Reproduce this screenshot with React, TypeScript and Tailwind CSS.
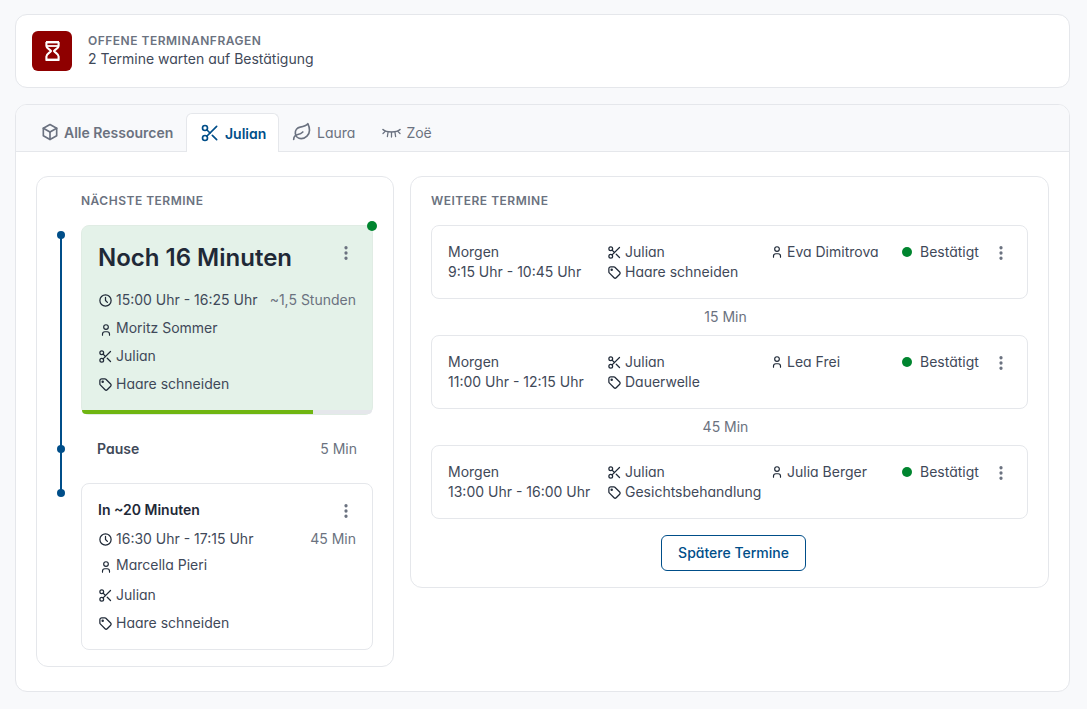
import React from "react";
import { TbBox, TbClock, TbUser, TbTag, TbDotsVertical } from "react-icons/tb";
import { Scissors, Leaf } from "lucide-react";

function InfoRow({ icon, children, className = "" }: { icon: React.ReactNode; children: React.ReactNode; className?: string }) {
  return (
    <div className={`flex items-center gap-[3px] text-[14px] leading-5 text-[#3f4959] ${className}`}>
      <span className="flex w-[15px] justify-center text-[#1f2937]">{icon}</span>
      <span>{children}</span>
    </div>
  );
}

function Dots({ className = "" }: { className?: string }) {
  return <TbDotsVertical size={18} strokeWidth={2.4} className={`text-[#6b7280] ${className}`} />;
}

function Hourglass() {
  return (
    <svg width="15" height="20" viewBox="0 0 15 20" fill="none" stroke="currentColor" strokeWidth="2.1" strokeLinejoin="round">
      <path d="M1 1.2h13" strokeWidth="2.4" />
      <path d="M1 5h13" strokeWidth="1.8" />
      <path d="M1.4 1v4C1.4 7.2 5 8.2 6 10 5 11.8 1.4 13 1.4 15.5V19h12.2v-3.5c0-2.5-3.6-3.7-4.6-5.5 1-1.8 4.6-2.8 4.6-5V1" />
      <path d="M1 18.8h13" strokeWidth="2.4" />
    </svg>
  );
}

function LashEye() {
  return (
    <svg width="19" height="11" viewBox="0 0 19 11" fill="none" stroke="currentColor" strokeWidth="1.6" strokeLinecap="round">
      <path d="M1 2.5C3 4.5 6 5 9.5 5s6.5-.5 8.5-2.5" />
      <path d="M6 5.5L5.4 9.5M9.5 5.5v4.5M13 5.5l.6 4M3.2 4.4L1 6.5M15.8 4.4L18 6.5" strokeWidth="1.3" />
    </svg>
  );
}

const later = [
  { time: "9:15 Uhr - 10:45 Uhr", service: "Haare schneiden", client: "Eva Dimitrova", gap: "15 Min" },
  { time: "11:00 Uhr - 12:15 Uhr", service: "Dauerwelle", client: "Lea Frei", gap: "45 Min" },
  { time: "13:00 Uhr - 16:00 Uhr", service: "Gesichtsbehandlung", client: "Julia Berger", gap: "" },
];

const labelClass = "text-[12px] font-semibold leading-4 tracking-[0.5px] text-[#6b7280]";

export default function App() {
  return (
    <div className="min-h-[709px] bg-[#f8f9fb] pl-[15px] pr-[17px] pt-[14px] pb-[17px] font-['Inter',sans-serif] [font-feature-settings:'cv11'] text-[#3f4959]">
      <div className="flex h-[74px] items-center gap-4 rounded-xl border border-[#e5e7eb] bg-white px-4">
        <div className="flex h-10 w-10 items-center justify-center rounded-md bg-[#8f0000] text-white">
          <Hourglass />
        </div>
        <div>
          <div className={labelClass}>OFFENE TERMINANFRAGEN</div>
          <div className="text-[14px] leading-5 text-[#3f4959]">2 Termine warten auf Bestätigung</div>
        </div>
      </div>

      <div className="mt-4 h-[588px] overflow-hidden rounded-xl border border-[#e5e7eb] bg-white">
        <div className="flex h-[47px] items-end border-b border-[#e5e7eb] bg-[#f8f9fb] pl-[24px] text-[14px]">
          <div className="flex h-[38px] w-[146px] items-center gap-[4px] font-semibold text-[#6b7280]">
            <TbBox size={20} />
            Alle Ressourcen
          </div>
          <div className="-mb-px flex h-[39px] w-[93px] items-center gap-[5px] rounded-t-md border border-b-0 border-[#e5e7eb] bg-white pl-[13px] font-semibold text-[#004e89]">
            <Scissors size={20} />
            Julian
          </div>
          <div className="flex h-[38px] items-center gap-[5px] pl-[13px] pr-[27px] text-[#6b7280]">
            <Leaf size={20} />
            Laura
          </div>
          <div className="flex h-[38px] items-center gap-[5px] text-[#6b7280]">
            <LashEye />
            Zoë
          </div>
        </div>

        <div className="flex items-start gap-4 px-5 pt-6">
          <div className="relative h-[491px] w-[358px] shrink-0 rounded-xl border border-[#e5e7eb] bg-white pl-11 pr-5 pt-4">
            <div className="absolute left-[23px] top-[58px] h-[258px] w-[2px] bg-[#004e89]" />
            <div className="absolute left-[20px] top-[54px] h-2 w-2 rounded-full bg-[#004e89]" />
            <div className="absolute left-[20px] top-[268px] h-2 w-2 rounded-full bg-[#004e89]" />
            <div className="absolute left-[20px] top-[312px] h-2 w-2 rounded-full bg-[#004e89]" />

            <div className={labelClass}>NÄCHSTE TERMINE</div>

            <div className="relative mt-4 h-[190px] rounded-lg border border-[#e0ece4] bg-[#e4f2e9]">
              <div className="absolute -right-[5px] -top-[5px] h-[10px] w-[10px] rounded-full bg-[#00852f]" />
              <div className="flex items-start justify-between pl-4 pr-[17px] pt-4">
                <div className="text-[24px] font-semibold leading-8 text-[#1f2937]">Noch 16 Minuten</div>
                <Dots className="mt-[2px]" />
              </div>
              <div className="mt-4 flex flex-col gap-2 pl-4 pr-4">
                <div className="flex justify-between">
                  <InfoRow icon={<TbClock size={15} />}>15:00 Uhr - 16:25 Uhr</InfoRow>
                  <span className="text-[14px] leading-5 text-[#6b7280]">~1,5 Stunden</span>
                </div>
                <InfoRow icon={<TbUser size={14} className="translate-y-[2px]" />}>Moritz Sommer</InfoRow>
                <InfoRow icon={<Scissors size={15} />}>Julian</InfoRow>
                <InfoRow icon={<TbTag size={15} />}>Haare schneiden</InfoRow>
              </div>
              <div className="absolute inset-x-0 bottom-0 h-1 overflow-hidden rounded-b-lg bg-[#e5e7eb]">
                <div className="h-1 w-[231px] bg-[#6fb511]" />
              </div>
            </div>

            <div className="flex h-[68px] items-center justify-between pb-[2px] pl-4 pr-4 text-[14px]">
              <span className="font-semibold text-[#3f4959]">Pause</span>
              <span className="text-[#6b7280]">5 Min</span>
            </div>

            <div className="h-[167px] rounded-lg border border-[#e5e7eb] bg-white px-4 pt-4">
              <div className="flex items-center justify-between pr-[1px]">
                <div className="text-[14px] font-semibold leading-5 text-[#1f2937]">In ~20 Minuten</div>
                <Dots className="translate-y-[1px]" />
              </div>
              <div className="mt-[9px] flex justify-between">
                <InfoRow icon={<TbClock size={15} />}>16:30 Uhr - 17:15 Uhr</InfoRow>
                <span className="text-[14px] leading-5 text-[#6b7280]">45 Min</span>
              </div>
              <InfoRow icon={<TbUser size={14} className="translate-y-[2px]" />} className="mt-[6px]">Marcella Pieri</InfoRow>
              <InfoRow icon={<Scissors size={15} />} className="mt-[10px]">Julian</InfoRow>
              <InfoRow icon={<TbTag size={15} />} className="mt-2">Haare schneiden</InfoRow>
            </div>
          </div>

          <div className="flex h-[412px] w-[639px] shrink-0 flex-col rounded-xl border border-[#e5e7eb] bg-white px-5 pt-4">
            <div className={labelClass}>WEITERE TERMINE</div>
            <div className="mt-4 flex flex-col">
              {later.map((t) => (
                <React.Fragment key={t.client}>
                  <div className="flex h-[74px] rounded-lg border border-[#e5e7eb] bg-white pl-4 pt-4 text-[14px] leading-5 text-[#3f4959]">
                    <div className="w-[159px] shrink-0">
                      <div>Morgen</div>
                      <div>{t.time}</div>
                    </div>
                    <div className="w-[162px] shrink-0">
                      <InfoRow icon={<Scissors size={15} />}>Julian</InfoRow>
                      <InfoRow icon={<TbTag size={15} />}>{t.service}</InfoRow>
                    </div>
                    <div className="w-[133px] shrink-0">
                      <InfoRow icon={<TbUser size={14} />}>{t.client}</InfoRow>
                    </div>
                    <div className="flex h-5 items-center gap-2">
                      <span className="h-[10px] w-[10px] rounded-full bg-[#00852f]" />
                      <span>Bestätigt</span>
                      <Dots className="ml-[5px] translate-y-[1px]" />
                    </div>
                  </div>
                  {t.gap && <div className="h-9 pr-2 text-center text-[14px] leading-9 text-[#6b7280]">{t.gap}</div>}
                </React.Fragment>
              ))}
            </div>
            <div className="mt-4 flex justify-center pl-2">
              <button className="h-9 w-[145px] rounded-md border border-[#004e89] bg-white pb-[2px] text-[14px] font-medium text-[#004e89]">Spätere Termine</button>
            </div>
          </div>
        </div>
      </div>
    </div>
  );
}
